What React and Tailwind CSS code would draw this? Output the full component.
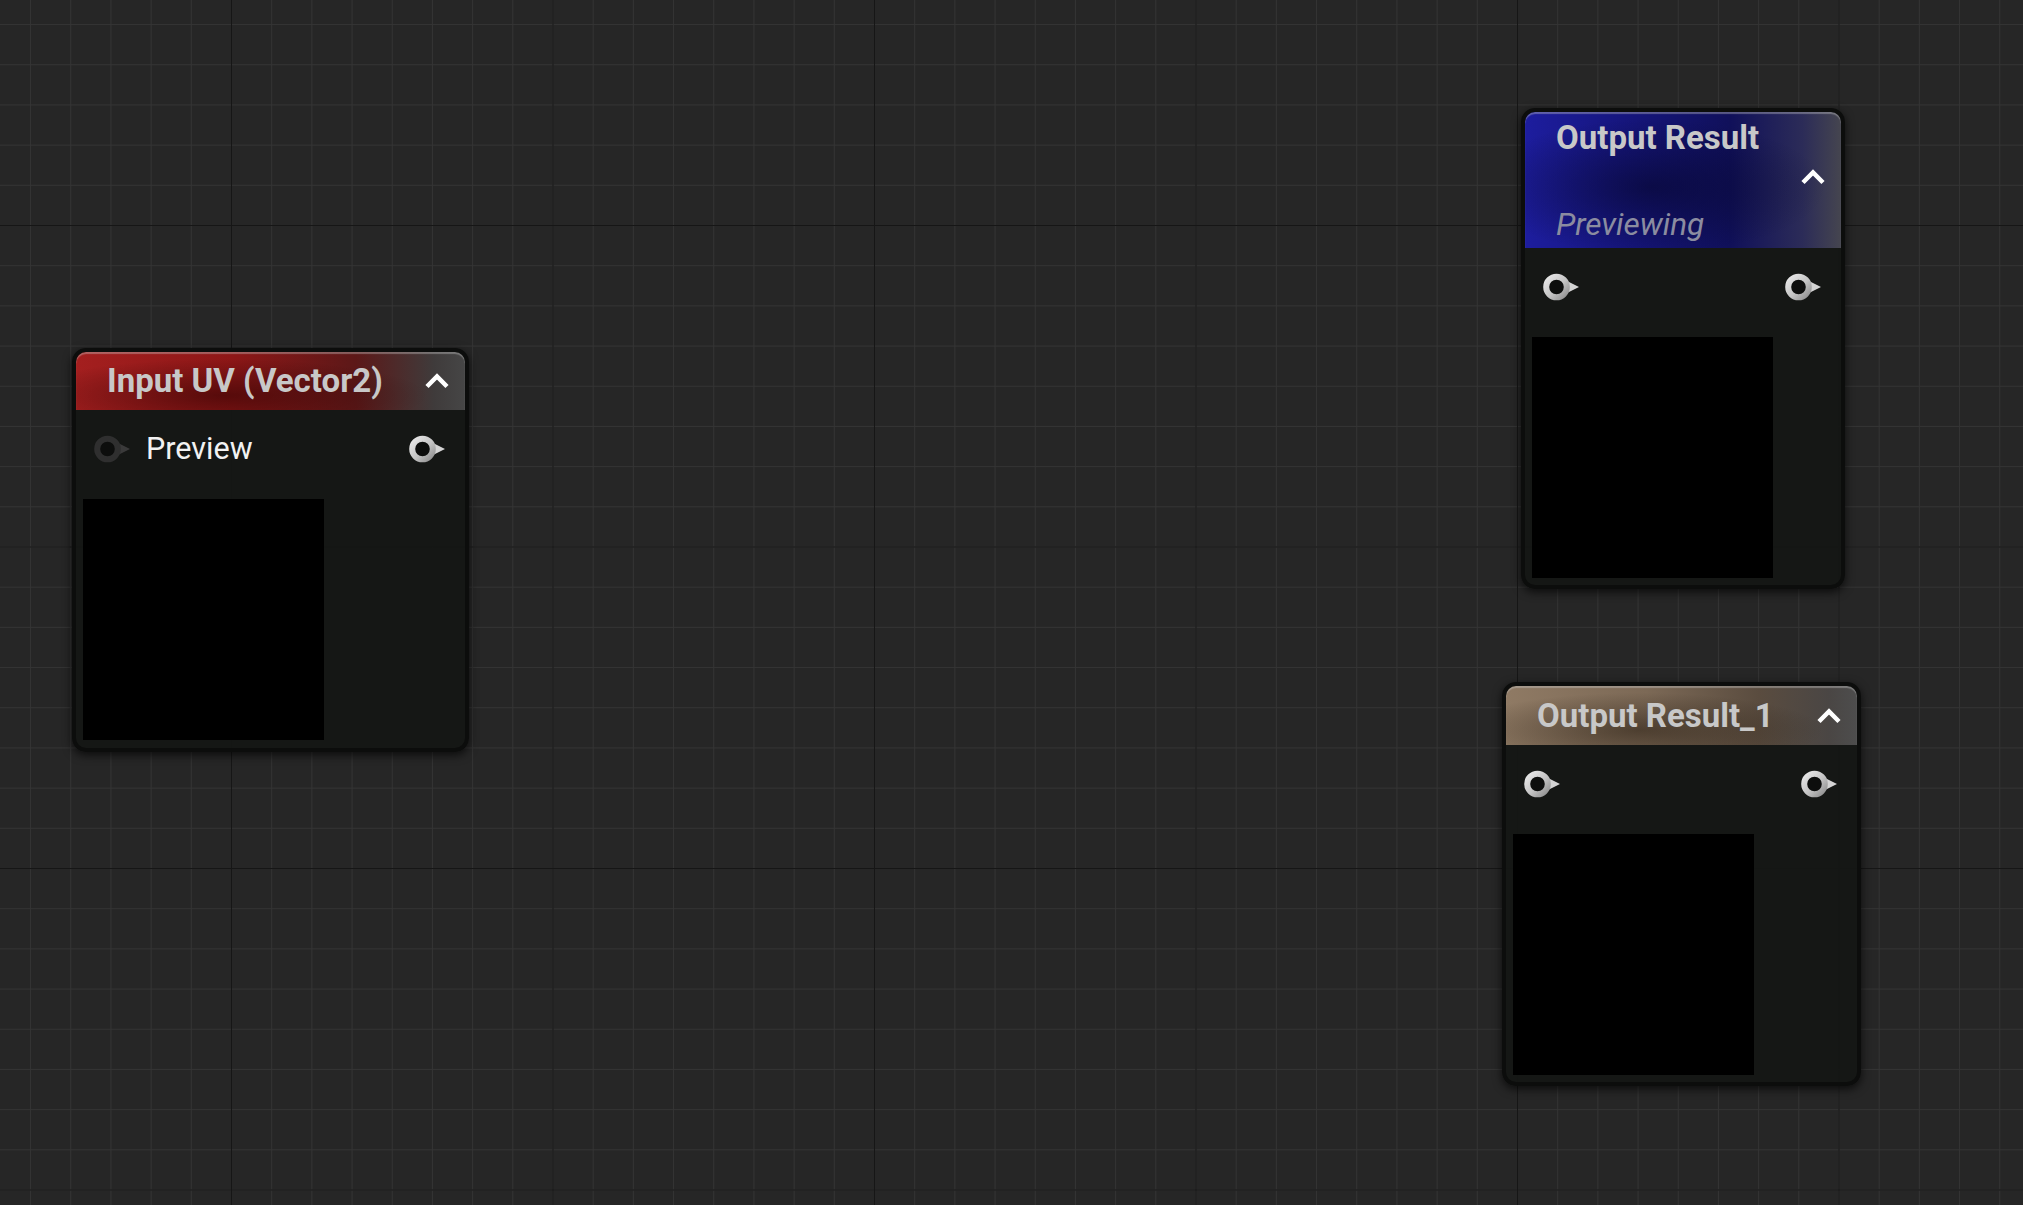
const nodes = [
  {
    id: "input-uv",
    title: "Input UV (Vector2)",
    pos: "left-[72px] top-[348px] w-[397px] h-[404px]",
    header: "h-[58px] bg-[radial-gradient(ellipse_at_38%_75%,rgba(40,0,0,0.55),transparent_60%),linear-gradient(to_right,#a41f1f_0%,#8e1717_40%,#5c1818_72%,#3f3b3b_92%,#464646_100%)]",
    inputLive: false,
    label: "Preview",
  },
  {
    id: "output-result",
    title: "Output Result",
    subtitle: "Previewing",
    pos: "left-[1521px] top-[108px] w-[324px] h-[481px]",
    header: "h-[136px] bg-[radial-gradient(ellipse_at_40%_55%,rgba(5,5,40,0.6),transparent_65%),linear-gradient(to_right,#1d1d9e_0%,#15157a_35%,#10105a_65%,#2c2c58_88%,#45454f_100%)]",
    inputLive: true,
  },
  {
    id: "output-result-1",
    title: "Output Result_1",
    pos: "left-[1502px] top-[682px] w-[359px] h-[404px]",
    header: "h-[59px] bg-[radial-gradient(ellipse_at_38%_75%,rgba(30,20,10,0.5),transparent_60%),linear-gradient(to_right,#8f7a64_0%,#7c6956_40%,#5a4c3f_72%,#4a4644_92%,#4d4d4d_100%)]",
    inputLive: true,
  },
]

function Pin({ live = true }) {
  const ring = live ? "url(#pinRing)" : "#2f2f2f"
  const tri = live ? "#d4d4d4" : "#3a3a3a"
  return (
    <svg width="38" height="28" viewBox="0 0 38 28" className="shrink-0">
      <defs>
        <linearGradient id="pinRing" x1="0" y1="0" x2="1" y2="1">
          <stop offset="0" stopColor="#e8e8e8" />
          <stop offset="0.55" stopColor="#c4c4c4" />
          <stop offset="1" stopColor="#909090" />
        </linearGradient>
      </defs>
      <polygon points="25,8.5 36,14 25,19.5" fill={tri} />
      <circle cx="13.5" cy="14" r="10.3" fill="#0d0e0d" stroke={ring} strokeWidth="6" />
    </svg>
  )
}

function Chevron() {
  return (
    <svg width="26" height="16" viewBox="0 0 26 16" className="shrink-0">
      <polyline points="3,13.5 13,3.5 23,13.5" fill="none" stroke="#ffffff" strokeWidth="4.5" strokeLinejoin="miter" />
    </svg>
  )
}

function GraphNode({ node }) {
  return (
    <div
      className={`absolute ${node.pos} flex flex-col rounded-[14px] border-[4px] border-[#0c0d0c] bg-[#141614]/95 shadow-[0_3px_10px_rgba(0,0,0,0.7)]`}
    >
      <div
        className={`${node.header} shrink-0 rounded-t-[10px] shadow-[inset_0_2px_1px_rgba(200,200,200,0.4)] flex items-center justify-between pl-[31px] pr-[15px]`}
      >
        {node.subtitle ? (
          <div className="flex flex-col self-stretch pt-[7px]">
            <div className="text-[33px] leading-[38px] font-bold text-[#c8c8c8]">{node.title}</div>
            <div className="mt-[50px] text-[31.5px] leading-[36px] italic text-[#8b8ca0]">{node.subtitle}</div>
          </div>
        ) : (
          <div className="text-[33px] leading-[38px] font-bold text-[#c8c8c8]">{node.title}</div>
        )}
        <div className={node.subtitle ? "-mt-[6px]" : ""}>
          <Chevron />
        </div>
      </div>
      <div className="flex flex-col pt-[25px] px-[7px]">
        <div className="flex items-center justify-between h-[28px] pl-[11px] pr-[11px]">
          <div className="flex items-center gap-[14px]">
            <Pin live={node.inputLive} />
            {node.label && <span className="text-[30.5px] leading-[28px] text-[#f2f2f2]">{node.label}</span>}
          </div>
          <Pin />
        </div>
        <div className="mt-[36px] w-[241px] h-[241px] bg-black" />
      </div>
    </div>
  )
}

export default function App() {
  return (
    <div className="relative w-[2023px] h-[1205px] overflow-hidden font-['Roboto',sans-serif] bg-[#262626] bg-[image:linear-gradient(to_right,#161616_1px,transparent_1px),linear-gradient(to_bottom,#161616_1px,transparent_1px),linear-gradient(to_right,#343434_1px,transparent_1px),linear-gradient(to_bottom,#343434_1px,transparent_1px)] bg-[size:321.5px_321.5px,321.5px_321.5px,40.1875px_40.1875px,40.1875px_40.1875px] bg-[position:231px_225px,231px_225px,231px_225px,231px_225px]">
      {nodes.map((n) => (
        <GraphNode key={n.id} node={n} />
      ))}
    </div>
  )
}
